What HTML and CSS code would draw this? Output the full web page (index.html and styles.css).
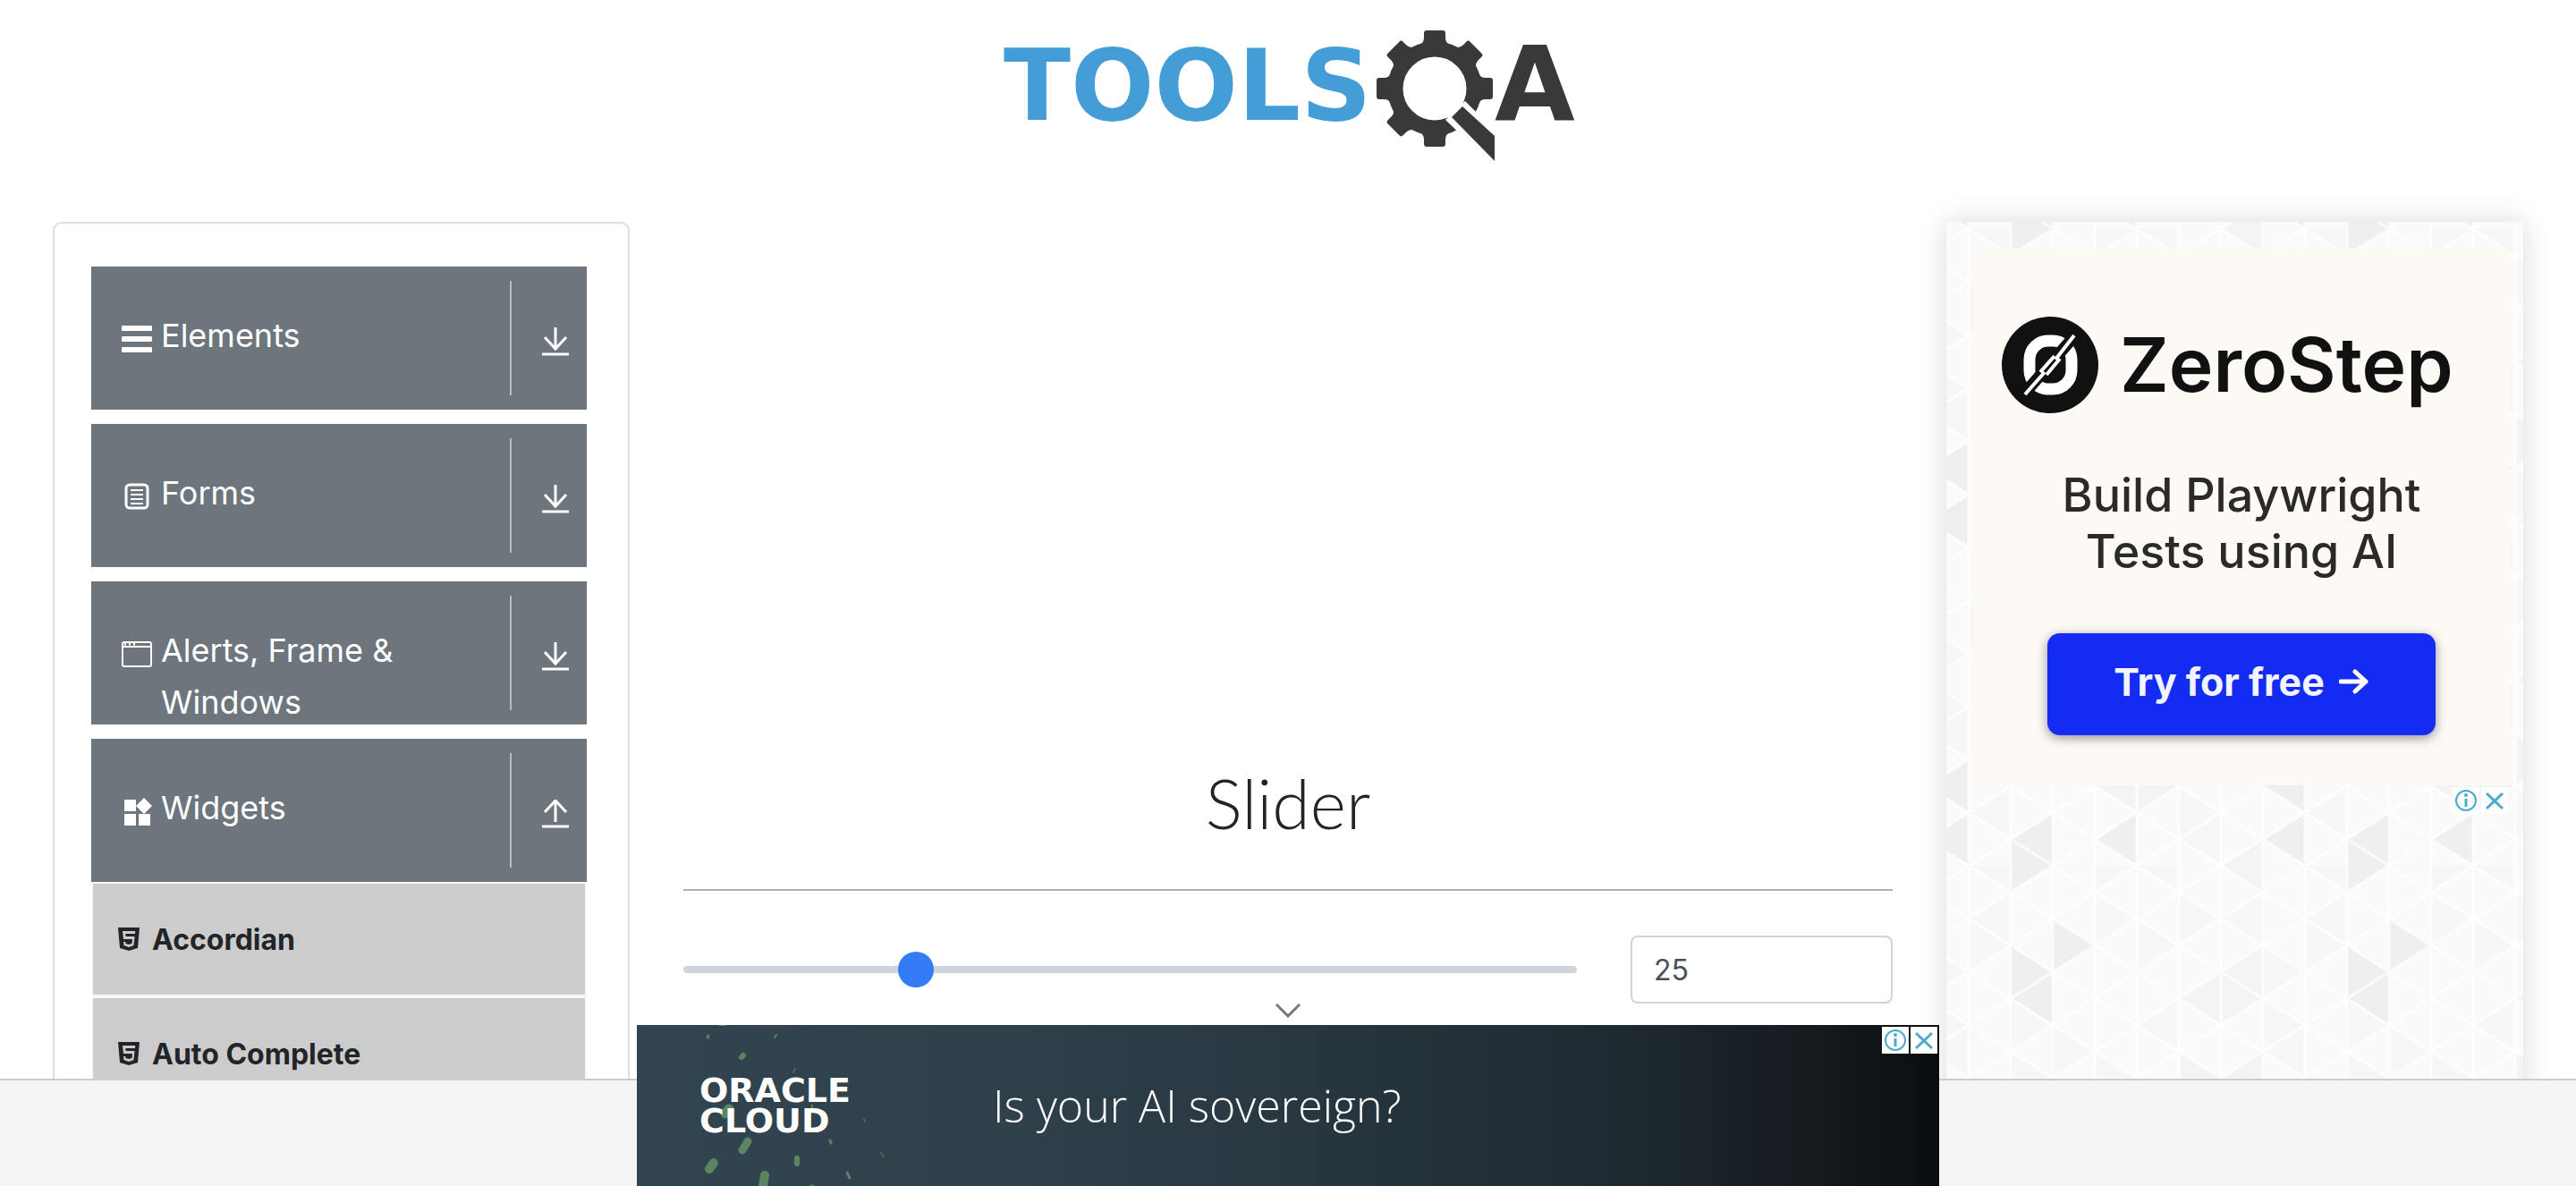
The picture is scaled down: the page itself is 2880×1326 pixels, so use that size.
FILE: index.html
```html
<!DOCTYPE html>
<html lang="en">
<head>
<meta charset="utf-8">
<meta name="viewport" content="width=device-width, initial-scale=1">
<title>ToolsQA</title>
<link rel="stylesheet" href="styles.css">
</head>
<body class="page">
<svg class="sprite" aria-hidden="true">
  <symbol id="arrow-down" viewBox="0 0 30 32"><path d="M15 0v23M3 11l12 13 12-13" fill="none" stroke="currentColor" stroke-width="3"/><path d="M0 30h30" stroke="currentColor" stroke-width="3"/></symbol>
  <symbol id="arrow-up" viewBox="0 0 30 32"><path d="M15 25V2M3 14L15 1l12 13" fill="none" stroke="currentColor" stroke-width="3"/><path d="M0 30h30" stroke="currentColor" stroke-width="3"/></symbol>
  <symbol id="html5" viewBox="0 0 24 26"><path fill="currentColor" fill-rule="evenodd" d="M0 0h24l-2 23-10 3-10-3zM5 4l1 9h10l-.5 5-3.500 1-3.500-1-.3-2H6l.5 4 5.500 2 5.500-2 1-10H8.500L8.300 7H19l.2-3z"/></symbol>
  <symbol id="info" viewBox="0 0 30 30"><circle cx="15" cy="15" r="11" fill="none" stroke="currentColor" stroke-width="2"/><circle cx="15" cy="9" r="2" fill="currentColor"/><path d="M15 13v9" stroke="currentColor" stroke-width="3"/></symbol>
  <symbol id="close" viewBox="0 0 30 30"><path d="M6 7l18 17M24 7L6 24" stroke="currentColor" stroke-width="3"/></symbol>
</svg>

<header class="header">
  <a class="brand" href="#" aria-label="ToolsQA">
    <svg class="brand-logo" viewBox="0 0 656 150">
      <text class="brand-tools" x="6" y="102">TOOLS</text>
      <g fill="#393939" transform="translate(4 0)">
        <circle cx="484" cy="67" r="44" fill="none" stroke="#393939" stroke-width="17"/>
        <g>
          <path id="tooth" d="M467 18q5-2 5-8V5q0-3 3-3h18q3 0 3 3v5q0 6 5 8z"/>
          <use href="#tooth" transform="rotate(45 484 67)"/>
          <use href="#tooth" transform="rotate(90 484 67)"/>
          <use href="#tooth" transform="rotate(180 484 67)"/>
          <use href="#tooth" transform="rotate(225 484 67)"/>
          <use href="#tooth" transform="rotate(270 484 67)"/>
          <use href="#tooth" transform="rotate(315 484 67)"/>
        </g>
        <path fill="#fff" d="M496 102l22-21 62 62-20 20z"/>
        <path d="M515 87l36 33v28l-48-49z"/>
      </g>
      <text class="brand-a" x="555" y="102">A</text>
    </svg>
  </a>
</header>

<main class="main">
  <nav class="menu">
    <div class="group">
      <button class="group-head" type="button">
        <svg class="group-icon" viewBox="0 0 34 34"><path d="M2 5h30M2 17h30M2 29h30" stroke="#fff" stroke-width="6" stroke-linecap="round"/></svg>
        <span class="group-title">Elements</span>
        <span class="group-toggle"><svg class="toggle-icon"><use href="#arrow-down"/></svg></span>
      </button>
    </div>
    <div class="group">
      <button class="group-head" type="button">
        <svg class="group-icon" viewBox="0 0 34 34"><rect x="5" y="4" width="24" height="26" rx="4" fill="none" stroke="#fff" stroke-width="3"/><path d="M10 10h14M10 15h14M10 20h14M10 25h14" stroke="#fff" stroke-width="2"/></svg>
        <span class="group-title">Forms</span>
        <span class="group-toggle"><svg class="toggle-icon"><use href="#arrow-down"/></svg></span>
      </button>
    </div>
    <div class="group">
      <button class="group-head" type="button">
        <svg class="group-icon" viewBox="0 0 34 34"><rect x="1" y="4" width="32" height="27" rx="2" fill="none" stroke="#fff" stroke-width="2"/><path d="M1 9h32" stroke="#fff" stroke-width="2"/><path d="M3 6h2M8 6h2M13 6h2" stroke="#fff" stroke-width="3"/></svg>
        <span class="group-title">Alerts, Frame &amp; Windows</span>
        <span class="group-toggle"><svg class="toggle-icon"><use href="#arrow-down"/></svg></span>
      </button>
    </div>
    <div class="group">
      <button class="group-head" type="button" aria-expanded="true">
        <svg class="group-icon" viewBox="0 0 34 34"><path fill="#fff" d="M3 4h13v13H3zM3 20h13v13H3zM19 20h13v13H19zM25 2l9 9-9 9-9-9z"/></svg>
        <span class="group-title">Widgets</span>
        <span class="group-toggle"><svg class="toggle-icon"><use href="#arrow-up"/></svg></span>
      </button>
      <ul class="items">
        <li class="item"><a class="item-link" href="#"><svg class="item-icon"><use href="#html5"/></svg>Accordian</a></li>
        <li class="item"><a class="item-link" href="#"><svg class="item-icon"><use href="#html5"/></svg>Auto Complete</a></li>
      </ul>
    </div>
  </nav>

  <section class="content">
    <h1 class="title">Slider</h1>
    <form class="slider-row">
      <input class="range" type="range" min="0" max="100" value="25" aria-label="Slider">
      <input class="value" type="text" value="25" aria-label="Slider value">
    </form>
  </section>

  <aside class="side">
    <div class="creative">
      <div class="zero">
        <svg class="zero-mark" viewBox="0 0 108 108">
          <circle cx="54" cy="54" r="54" fill="#111"/>
          <rect x="31" y="27" width="47" height="54" rx="21" fill="none" stroke="#fff" stroke-width="13"/>
          <path d="M20 92L88 14" stroke="#111" stroke-width="13"/>
          <path d="M26 87L48 62M60 48L81 21M43 62L59 44M50 65L65 47" stroke="#fff" stroke-width="4"/>
        </svg>
        <span class="zero-name">ZeroStep</span>
      </div>
      <p class="pitch">Build Playwright<br>Tests using AI</p>
      <a class="try" href="#">Try for free
        <svg class="try-arrow" viewBox="0 0 34 30"><path d="M2 15h28M18 4l12 11-12 11" fill="none" stroke="#fff" stroke-width="5" stroke-linecap="round" stroke-linejoin="round"/></svg>
      </a>
    </div>
    <div class="badges">
      <button class="badge" type="button" aria-label="Ad info"><svg class="badge-icon"><use href="#info"/></svg></button>
      <button class="badge" type="button" aria-label="Close ad"><svg class="badge-icon"><use href="#close"/></svg></button>
    </div>
  </aside>
</main>

<footer class="footer">
  <div class="anchor">
    <button class="collapse" type="button" aria-label="Collapse ad"><svg class="collapse-icon" viewBox="0 0 28 16"><path d="M1 1l13 13L27 1" fill="none" stroke="#777" stroke-width="3"/></svg></button>
    <div class="banner">
      <svg class="leaves" viewBox="0 0 400 180" aria-hidden="true">
        <g stroke="#5b8460" stroke-linecap="round">
          <path d="M93 0h6" stroke-width="2"/>
          <path d="M79 14l1-2" stroke-width="3"/>
          <path d="M117 36l2-2" stroke-width="6"/>
          <path d="M99 99l4-5" stroke-width="11"/>
          <path d="M118 140l6-10" stroke-width="9"/>
          <path d="M81 161l5-7" stroke-width="10"/>
          <path d="M141 180l2-12" stroke-width="10"/>
          <path d="M179 149v6" stroke-width="6"/>
          <path d="M216 129l1 3" stroke-width="3"/>
          <path d="M235 165l3 6" stroke-width="3"/>
          <path d="M154 14l2-3" stroke-width="2"/>
          <path d="M175 53l2-4M254 105l1 3M273 143l3 4" stroke-width="2" opacity=".6"/>
          <path d="M196 90v5" stroke-width="2"/>
          <path d="M158 113v1" stroke-width="3"/>
          <path d="M195 180h2" stroke-width="3"/>
        </g>
      </svg>
      <p class="oracle">ORACLE<br>CLOUD</p>
      <p class="question">Is your AI sovereign?</p>
      <div class="badges badges-banner">
        <button class="badge" type="button" aria-label="Ad info"><svg class="badge-icon"><use href="#info"/></svg></button>
        <button class="badge" type="button" aria-label="Close ad"><svg class="badge-icon"><use href="#close"/></svg></button>
      </div>
    </div>
  </div>
</footer>
</body>
</html>
```
FILE: styles.css
```css
* { box-sizing: border-box; }

.page {
  display: flex;
  flex-direction: column;
  height: 100vh;
  margin: 0;
  overflow: hidden;
  background: #fff;
  color: #212529;
  font-family: Inter, "Liberation Sans", sans-serif;
  font-size: 32px;
}

.sprite { position: absolute; width: 0; height: 0; }

button { border: 0; padding: 0; font: inherit; cursor: pointer; }

/* Header */
.header {
  flex: none;
  display: flex;
  justify-content: center;
  height: 200px;
  padding: 32px 0 0 8px;
}
.brand { display: block; height: 150px; }
.brand-logo { display: block; width: 656px; height: 150px; overflow: visible; }
.brand-tools, .brand-a {
  font-family: "DejaVu Sans", sans-serif;
  font-weight: 700;
}
.brand-tools { fill: #459dd8; font-size: 110px; }
.brand-a { fill: #393939; font-size: 116px; }

/* Three columns */
.main {
  flex: 1;
  min-height: 0;
  overflow: hidden;
  display: grid;
  grid-template-columns: 645fr 1352fr 645fr;
  gap: 60px;
  padding: 48px 59px 0;
}

/* Left menu */
.menu {
  display: flex;
  flex-direction: column;
  gap: 16px;
  padding: 48px 46px 48px 41px;
  border: 2px solid #dfdfdf;
  border-radius: 10px;
}
.group-head {
  display: flex;
  align-items: flex-start;
  width: 100%;
  height: 160px;
  padding: 16px 0 0 34px;
  overflow: hidden;
  background: #6d757d;
  color: #fff;
  text-align: left;
}
.group-icon { flex: none; width: 34px; height: 34px; margin: 48px 10px 0 0; }
.group-title { flex: 1; padding: 32px 40px 0 0; font-size: 36px; line-height: 58px; }
.group-toggle {
  flex: none;
  width: 86px;
  height: 128px;
  padding: 52px 0 0 34px;
  border-left: 2px solid #bbb;
}
.toggle-icon { display: block; width: 30px; height: 32px; }

.items { margin: 0; padding: 0; list-style: none; background: #f8f8f8; }
.item { padding: 2px; }
.item-link {
  display: flex;
  align-items: center;
  gap: 14px;
  height: 124px;
  padding-left: 28px;
  background: #ccc;
  color: #212529;
  font-weight: 700;
  font-size: 32px;
  text-decoration: none;
}
.item-icon { width: 24px; height: 26px; }

/* Middle column */
.content { padding-top: 600px; }
.title {
  margin: 0 0 50px;
  padding-bottom: 48px;
  border-bottom: 2px solid #b0b0b0;
  font-family: Lato, sans-serif;
  font-weight: 300;
  font-size: 77px;
  line-height: 98px;
  text-align: center;
}
.slider-row { display: flex; align-items: center; gap: 60px; }
.range {
  flex: 1;
  min-width: 0;
  height: 40px;
  margin: 0;
  background: transparent;
  appearance: none;
}
.range::-webkit-slider-runnable-track { height: 8px; border-radius: 4px; background: #ced4da; }
.range::-webkit-slider-thumb {
  width: 40px;
  height: 40px;
  margin-top: -16px;
  border-radius: 50%;
  background: #347cf7;
  appearance: none;
}
.value {
  width: 293px;
  height: 76px;
  padding: 0 24px;
  border: 2px solid #ced4da;
  border-radius: 8px;
  background: #fff;
  color: #495057;
  font: inherit;
}

/* Right column */
.side {
  padding: 30px 15px 0 30px;
  background: #fafafa url("data:image/svg+xml,%3Csvg xmlns='http://www.w3.org/2000/svg' width='376' height='356' viewBox='0 0 8 6' preserveAspectRatio='none'%3E%3Cpath fill='%23efefef' d='M2 5v1L1 5.500zM1 5.500v1L2 6zM1-.5v1L2 0zM4 5v1L3 5.500zM8 5v1L7 5.500zM8 4v1L7 4.500zM2 1v1L3 1.500zM1 1.500v1L2 2zM2 2v1L1 2.500z'/%3E%3Cpath fill='%23f4f4f4' d='M7-.5v1L6 0zM7 5.500v1L6 6zM4 4v1L3 4.500zM4 4v1L5 4.500zM6 2v1L5 2.500zM6 2v1L7 2.500zM7 1.500v1L6 2zM5 3.500v1L6 4zM7 3.500v1L6 4z'/%3E%3Cpath fill='%23f7f7f7' d='M1 .5v1L0 1zM5 .5v1L6 1zM7 .5v1L6 1zM0 1v1L1 1.500zM4 1v1L5 1.500zM7 1.500v1L8 2zM5 2.500v1L4 3zM1 2.500v1L2 3zM2 3v1L3 3.500zM1 3.500v1L2 4zM3 3.500v1L4 4zM8 3v1L7 3.500zM1 4.500v1L0 5zM5 4.500v1L6 5zM3-.5v1L4 0zM5-.5v1L4 0zM3 .5v1L4 1zM1 -.5v1L0 0zM6 5v1L5 5.500zM7 2.500v1L8 3z'/%3E%3Cg fill='none' stroke='%23fff' stroke-width='3' stroke-opacity='.7'%3E%3Cpath vector-effect='non-scaling-stroke' d='M0 0v6M1 0v6M2 0v6M3 0v6M4 0v6M5 0v6M6 0v6M7 0v6M8 0v6M0-3l8 4M0-2l8 4M0-1l8 4M0 0l8 4M0 1l8 4M0 2l8 4M0 3l8 4M0 4l8 4M0 5l8 4M0 1l8-4M0 2l8-4M0 3l8-4M0 4l8-4M0 5l8-4M0 6l8-4M0 7l8-4M0 8l8-4M0 9l8-4'/%3E%3C/g%3E%3C/svg%3E") 25px 8px;
  box-shadow: 0 0 30px rgba(0, 0, 0, .15);
}
.creative {
  display: flex;
  flex-direction: column;
  align-items: center;
  height: 600px;
  padding-top: 76px;
  background: #fdf9f4;
}
.zero {
  display: flex;
  align-items: center;
  align-self: flex-start;
  gap: 24px;
  height: 108px;
  padding-left: 32px;
}
.zero-mark { width: 108px; height: 108px; }
.zero-name { color: #111; font-weight: 600; font-size: 84px; line-height: 108px; }
.pitch {
  margin: 60px 0 0;
  color: #2c2a28;
  font-weight: 500;
  font-size: 52px;
  line-height: 63px;
  text-align: center;
}
.try {
  display: flex;
  align-items: center;
  justify-content: center;
  gap: 16px;
  width: 434px;
  height: 114px;
  margin-top: 60px;
  padding-bottom: 6px;
  border-radius: 14px;
  background: #142cf2;
  box-shadow: 0 3px 12px rgba(40, 40, 60, .5);
  color: #f2f4ff;
  font-weight: 700;
  font-size: 43px;
  text-decoration: none;
}
.try-arrow { width: 34px; height: 30px; }

.badges { display: flex; justify-content: flex-end; gap: 2px; padding: 2px; }
.badge { width: 30px; height: 30px; background: #fff; color: #4aaccd; }
.badge-icon { display: block; width: 30px; height: 30px; }

/* Footer with the anchored banner */
.footer {
  position: relative;
  flex: none;
  display: flex;
  justify-content: center;
  align-items: flex-end;
  height: 120px;
  border-top: 2px solid #ccc;
  background: #f4f4f4;
}
.anchor { position: absolute; bottom: 0; width: 1456px; }
.collapse { display: block; margin: 0 auto 8px; background: transparent; }
.collapse-icon { display: block; width: 28px; height: 16px; }
.banner {
  position: relative;
  display: flex;
  align-items: center;
  height: 180px;
  padding-left: 70px;
  background: linear-gradient(90deg, #32444f 0%, #2f404b 30%, #28363f 52%, #1e2a30 76%, #171d22 88%, #0a0e11 100%);
  color: #fff;
}
.leaves { position: absolute; left: 0; top: 0; width: 400px; height: 180px; }
.oracle {
  position: relative;
  width: 328px;
  margin: 0;
  font-family: "DejaVu Sans", sans-serif;
  font-weight: 700;
  font-size: 38px;
  line-height: 34px;
}
.question {
  margin: 0;
  font-family: "Open Sans", sans-serif;
  font-weight: 300;
  font-size: 50px;
  line-height: 70px;
}
.badges-banner { position: absolute; top: 0; right: 0; }
```
